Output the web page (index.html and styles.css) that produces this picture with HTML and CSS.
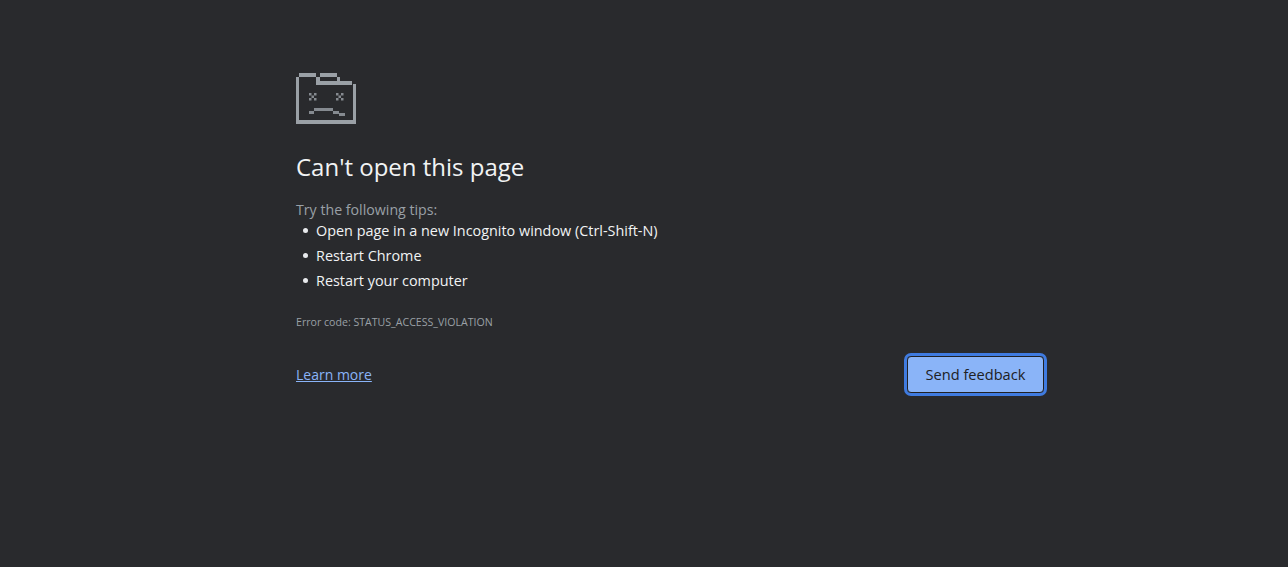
FILE: index.html
```html
<!DOCTYPE html>
<html lang="en">
<head>
  <meta charset="UTF-8" />
  <title>Can't open this page</title>
  <link rel="stylesheet" href="styles.css">
</head>
<body>
  <main class="container">
    <svg class="sad-icon" width="60" height="51" viewBox="0 0 60 51" fill="#9aa0a6" aria-hidden="true">
      <!-- folder outline -->
      <path d="M3 0h17v4H3zM24 0h17v4H24zM0 4h3v47H0zM20 4h4v4h17V4h3v4h12v4H20zM57 11h3v40h-3zM3 47h54v4H3z"/>
      <!-- eyes -->
      <path fill="#858a90" d="M13 20h2.500v2.500H13zM18 20h2.500v2.500H18zM15.500 22.500h2.500V25h-2.500zM13 25h2.500v2.500H13zM18 25h2.500v2.500H18z"/>
      <path fill="#858a90" d="M40 20h2.500v2.500H40zM45 20h2.500v2.500H45zM42.500 22.500H45V25h-2.500zM40 25h2.500v2.500H40zM45 25h2.500v2.500H45z"/>
      <!-- mouth -->
      <path fill="#858a90" d="M13 38h5v3h-5zM18 35h19v3H18zM37 38h6v3h-6zM43 40h6v3h-6z"/>
    </svg>
    <h1 class="title">Can't open this page</h1>
    <p class="tips-label">Try the following tips:</p>
    <ul class="tips">
      <li>Open page in a new Incognito window (Ctrl-Shift-N)</li>
      <li>Restart Chrome</li>
      <li>Restart your computer</li>
    </ul>
    <div class="error-code">Error code: STATUS_ACCESS_VIOLATION</div>
    <div class="actions">
      <a class="learn-more" href="#">Learn more</a>
      <button class="feedback-button">Send feedback</button>
    </div>
  </main>
</body>
</html>
```

FILE: styles.css
```css
* {
  margin: 0;
  padding: 0;
  box-sizing: border-box;
}

body {
  font-family: "Open Sans", "Noto Sans", sans-serif;
  background: #292a2d;
  color: #e8eaed;
  min-height: 100vh;
}

.container {
  width: 750px;
  margin-left: 296px;
  padding-top: 73px;
}

.sad-icon {
  display: block;
}

.title {
  margin-top: 27px;
  font-size: 24px;
  line-height: 32px;
  font-weight: 400;
  color: #f1f3f4;
}

.tips-label {
  margin-top: 17px;
  font-size: 14.200px;
  line-height: 20px;
  color: #9aa0a6;
}

.tips {
  list-style: none;
  margin-top: -2.500px;
}

.tips li {
  position: relative;
  padding-left: 20px;
  font-size: 14.400px;
  line-height: 25px;
  color: #f1f3f4;
}

.tips li::before {
  content: "";
  position: absolute;
  left: 7px;
  top: 10px;
  width: 5px;
  height: 5px;
  border-radius: 50%;
  background: #e8eaed;
}

.error-code {
  margin-top: 21px;
  font-size: 10.600px;
  line-height: 16px;
  color: #9aa0a6;
}

.actions {
  margin-top: 23px;
  display: flex;
  justify-content: space-between;
  align-items: center;
}

.learn-more {
  font-size: 14px;
  color: #8ab4f8;
}

.feedback-button {
  width: 137px;
  height: 37px;
  margin: 3px 2px 3px 0;
  background: #8ab4f8;
  color: #202124;
  border: 1px solid #202124;
  border-radius: 4px;
  outline: 3px solid #3f7be0;
  outline-offset: 0;
  font-family: inherit;
  font-size: 14.600px;
  font-weight: 500;
  cursor: pointer;
}
```
